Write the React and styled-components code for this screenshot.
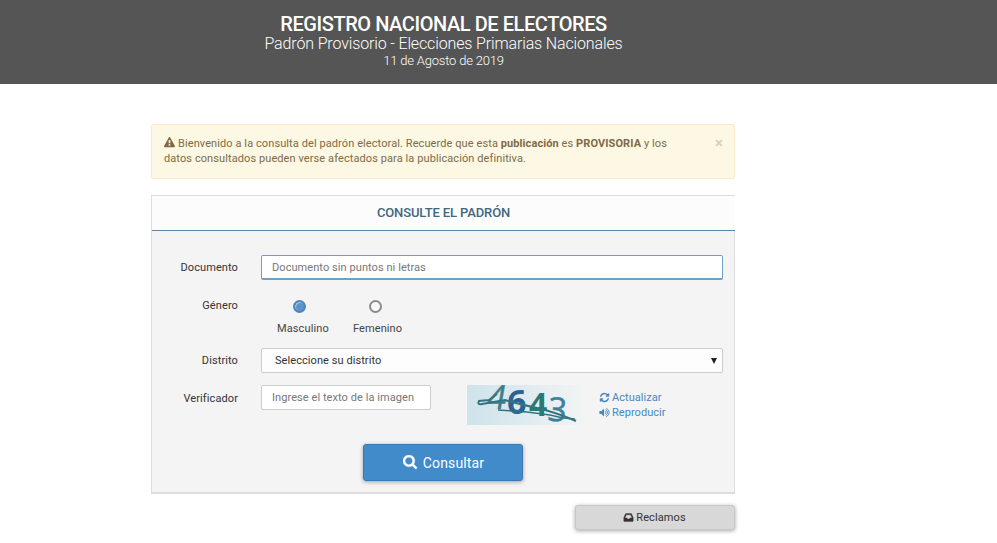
import React, { useState } from "react";
import styled, { createGlobalStyle } from "styled-components";

const GlobalStyle = createGlobalStyle`
  * {
    box-sizing: border-box;
  }

  body {
    min-height: 100vh;
    margin: 0;
    background: #fff;
    color: #333;
    font-family: Roboto, sans-serif;
    font-size: 11px;
    line-height: 15px;
  }
`;

const Page = styled.div`
  min-height: 100vh;
`;

// Dark top band
const Header = styled.header`
  height: 84px;
  padding: 13px 110px 0 0;
  background: #555;
  color: #fff;
  text-align: center;
`;

const Title = styled.h1`
  margin: 0;
  font-size: 20px;
  font-weight: 500;
  letter-spacing: -0.43px;
  line-height: 22px;
`;

const Subtitle = styled.div`
  font-size: 16px;
  font-weight: 300;
  letter-spacing: -0.14px;
  line-height: 17px;
`;

const HeaderDate = styled.div`
  font-size: 13px;
  font-weight: 300;
  letter-spacing: -0.2px;
  line-height: 17px;
`;

const Main = styled.main`
  width: 584px;
  margin: 40px 0 0 151px;
`;

// Warning message
const Alert = styled.div`
  display: flex;
  justify-content: space-between;
  height: 55px;
  padding: 11px 11px 0 12px;
  border: 1px solid #faebcc;
  border-radius: 2px;
  background: #fcf8e3;
  color: #806a45;
`;

const AlertText = styled.div`
  width: 520px;
  letter-spacing: 0.09px;
`;

const CloseButton = styled.button`
  align-self: flex-start;
  padding: 0;
  border: 0;
  background: none;
  color: #d8d2bd;
  font: bold 15px/15px Roboto, sans-serif;
`;

const Glyph = styled.svg`
  width: ${({ $size }) => $size}px;
  height: ${({ $size }) => $size}px;
  margin-right: ${({ $gap }) => $gap || 2}px;
  fill: currentColor;
  vertical-align: ${({ $drop }) => $drop || -2}px;
`;

// Form panel
const Panel = styled.section`
  height: 299px;
  margin-top: 16px;
  border: 1px solid #ddd;
  border-bottom: 2px solid #ddd;
  background: #f4f4f4;
`;

const PanelTitle = styled.h2`
  height: 35px;
  margin: 0 -1px 0 0;
  border-bottom: 1px solid #5b87a3;
  background: #fcfcfc;
  color: #41677f;
  font-size: 13px;
  font-weight: 500;
  letter-spacing: -0.12px;
  line-height: 34px;
  text-align: center;
`;

const Form = styled.form`
  padding: 24px 11px 0 0;
`;

const Row = styled.div`
  display: grid;
  grid-template-columns: 86px 1fr;
  column-gap: 23px;
  height: ${({ $height }) => $height}px;
`;

const Label = styled.label`
  padding-top: ${({ $top }) => $top || 5}px;
  letter-spacing: 0.1px;
  text-align: right;
`;

const Input = styled.input`
  width: ${({ $width }) => $width || "100%"};
  height: 25px;
  padding: 0 10px;
  border: 1px solid ${({ $active }) => ($active ? "#6ba3c8" : "#ccc")};
  border-bottom-width: ${({ $active }) => ($active ? 2 : 1)}px;
  border-radius: 2px;
  outline: 0;
  background: #fff;
  color: #333;
  font: 11px Roboto, sans-serif;
  letter-spacing: 0.07px;

  &::placeholder {
    color: #777;
    opacity: 1;
  }
`;

const Select = styled.div`
  display: flex;
  align-items: center;
  justify-content: space-between;
  height: 25px;
  padding: 0 5px 0 13px;
  border: 1px solid #ccc;
  border-radius: 2px;
  background: #fdfdfd;
  letter-spacing: 0.07px;
`;

const Arrow = styled.span`
  border: 3.5px solid transparent;
  border-top: 6px solid #222;
  border-bottom: 0;
`;

const Options = styled.div`
  display: flex;
  gap: 24px;
  padding: 7px 0 0 16px;
`;

const Option = styled.button`
  display: flex;
  flex-direction: column;
  gap: 8px;
  height: 36px;
  padding: 0;
  border: 0;
  background: none;
  color: #444;
  font: 11px/15px Roboto, sans-serif;
  letter-spacing: 0.12px;
`;

const Dot = styled.span`
  width: 13px;
  height: 13px;
  margin-left: 16px;
  border: 2px solid ${({ $on }) => ($on ? "#4f86ba" : "#8b8b8b")};
  border-radius: 50%;
  background: ${({ $on }) => ($on ? "#5a94ca" : "#f8f8f8")};
  box-shadow: ${({ $on }) => ($on ? "inset 1px 1px 0 #a4c6e4" : "none")};
`;

const Verifier = styled.div`
  display: flex;
  align-items: flex-start;
`;

const Captcha = styled.svg`
  width: 120px;
  height: 40px;
  margin: 0 12px 0 36px;
`;

const Links = styled.div`
  display: flex;
  flex-direction: column;
  padding-top: 5px;
`;

const Link = styled.a`
  color: #4a88c0;
  letter-spacing: 0.05px;
  text-decoration: none;
  white-space: nowrap;
`;

const SubmitButton = styled.button`
  display: block;
  width: 160px;
  height: 37px;
  margin: 0 auto;
  padding: 0 0 0 1px;
  border: 1px solid #3879b3;
  border-radius: 3px;
  background: #428bca;
  box-shadow: 0 1px 4px rgba(0, 0, 0, 0.35);
  color: #fff;
  font: 14px/34px Roboto, sans-serif;
  letter-spacing: 0.15px;
`;

const ClaimsButton = styled.button`
  display: block;
  width: 160px;
  height: 25px;
  margin: 11px 0 0 auto;
  padding: 0 1px 0 0;
  border: 1px solid #c8c8c8;
  border-radius: 3px;
  background: #d8d8d8;
  box-shadow: 0 1px 4px rgba(0, 0, 0, 0.35);
  color: #333;
  font: 11px/23px Roboto, sans-serif;
  letter-spacing: 0.1px;
`;

const ICONS = {
  warning:
    "M1024 1375v-190q0-14-9.500-23.500t-22.500-9.500h-192q-13 0-22.500 9.500t-9.500 23.500v190q0 14 9.500 23.500t22.500 9.500h192q13 0 22.500-9.500t9.500-23.500zm-2-374l18-459q0-12-10-19-13-11-24-11h-220q-11 0-24 11-10 7-10 21l17 457q0 10 10 16.500t24 6.500h185q14 0 23.500-6.500t10.500-16.500zm-14-934l768 1408q35 63-2 126-17 29-46.500 46t-63.500 17h-1536q-34 0-63.500-17t-46.500-46q-37-63-2-126l768-1408q17-31 47-49t65-18 65 18 47 49z",
  refresh:
    "M1639 1056q0 5-1 7-64 268-268 434.500t-478 166.500q-146 0-282.500-55t-243.500-157l-129 129q-19 19-45 19t-45-19-19-45v-448q0-26 19-45t45-19h448q26 0 45 19t19 45-19 45l-137 137q71 66 161 102t187 36q134 0 250-65t186-179q11-17 53-117 8-23 30-23h192q13 0 22.500 9.500t9.500 22.500zm25-800v448q0 26-19 45t-45 19h-448q-26 0-45-19t-19-45 19-45l138-138q-148-137-349-137-134 0-250 65t-186 179q-11 17-53 117-8 23-30 23h-199q-13 0-22.500-9.500t-9.500-22.500v-7q65-268 270-434.500t480-166.500q146 0 284 55.500t245 156.500l130-129q19-19 45-19t45 19 19 45z",
  search:
    "M1152 704q0-185-131.500-316.500t-316.500-131.500-316.500 131.500-131.500 316.500 131.500 316.500 316.500 131.500 316.500-131.500 131.500-316.500zm512 832q0 52-38 90t-90 38q-54 0-90-38l-343-342q-179 124-399 124-143 0-273.500-55.500t-225-150-150-225-55.500-273.500 55.500-273.500 150-225 225-150 273.500-55.500 273.500 55.500 225 150 150 225 55.500 273.500q0 220-124 399l343 343q37 37 37 90z",
  inbox:
    "M1151 960h316q-1-3-2.500-8t-2.500-8l-212-496h-708l-212 496q-1 2-2.500 8t-2.500 8h316l95 192h320zm513 30v482q0 26-19 45t-45 19h-1408q-26 0-45-19t-19-45v-482q0-62 25-123l238-552q10-25 36.500-42t52.500-17h832q26 0 52.500 17t36.500 42l238 552q25 61 25 123z",
};

const Icon = ({ name, size, gap, drop, bold }) => (
  <Glyph viewBox="0 0 1792 1792" $size={size} $gap={gap} $drop={drop}>
    <path d={ICONS[name]} stroke="currentColor" strokeWidth={bold || 0} />
  </Glyph>
);

const VolumeIcon = () => (
  <Glyph viewBox="0 0 1792 1792" $size={11}>
    <path d="M832 352v1088q0 26-19 45t-45 19-45-19l-333-333h-262q-26 0-45-19t-19-45v-384q0-26 19-45t45-19h262l333-333q19-19 45-19t45 19 19 45z" />
    <g fill="none" stroke="currentColor" strokeWidth="150" strokeLinecap="round">
      <path d="M1035 710q117 60 117 186t-117 186" />
      <path d="M1137 475q271 132 271 421t-271 421" />
      <path d="M1238 240q426 214 426 656t-426 656" />
    </g>
  </Glyph>
);

const CaptchaImage = () => (
  <Captcha viewBox="0 0 120 40">
    <defs>
      <linearGradient id="captchaBg">
        <stop offset="0" stopColor="#cfe3eb" />
        <stop offset="0.5" stopColor="#dfebf0" />
        <stop offset="1" stopColor="#f4f4f4" />
      </linearGradient>
    </defs>
    <rect width="120" height="40" fill="url(#captchaBg)" />
    <g fontFamily="Open Sans, sans-serif">
      <text
        x="19"
        y="24"
        fontSize="33"
        fill="#3e7f87"
        stroke="#3e7f87"
        strokeWidth="0.5"
        transform="translate(4 0) skewX(-10)"
      >
        4
      </text>
      <text x="40" y="29" fontSize="34" fontWeight="700" fill="#2b6294">6</text>
      <text x="62" y="31" fontSize="32" fontWeight="700" fill="#287b75">4</text>
      <text
        x="81"
        y="36"
        fontSize="33"
        fill="#3a829c"
        stroke="#3a829c"
        strokeWidth="0.5"
        transform="rotate(5 90 25)"
      >
        3
      </text>
    </g>
    <g fill="none" stroke="#347481">
      <path
        d="M30 9L22 15L12 16Q10 20 15 19L38 15Q52 19 70 23T109 36"
        strokeWidth="2"
      />
      <path d="M31 25L60 27L83 30L96 33L108 34" strokeWidth="1.500" />
    </g>
  </Captcha>
);

const genders = ["Masculino", "Femenino"];

const App = () => {
  const [gender, setGender] = useState("Masculino");

  return (
    <Page>
      <GlobalStyle />
      <Header>
        <Title>REGISTRO NACIONAL DE ELECTORES</Title>
        <Subtitle>Padrón Provisorio - Elecciones Primarias Nacionales</Subtitle>
        <HeaderDate>11 de Agosto de 2019</HeaderDate>
      </Header>

      <Main>
        <Alert>
          <AlertText>
            <Icon name="warning" size={11} gap={3} drop={-1} />
            Bienvenido a la consulta del padrón electoral. Recuerde que esta{" "}
            <b>publicación</b> es <b>PROVISORIA</b> y los datos consultados
            pueden verse afectados para la publicación definitiva.
          </AlertText>
          <CloseButton>×</CloseButton>
        </Alert>

        <Panel>
          <PanelTitle>CONSULTE EL PADRÓN</PanelTitle>
          <Form onSubmit={(e) => e.preventDefault()}>
            <Row $height={38}>
              <Label>Documento</Label>
              <Input $active placeholder="Documento sin puntos ni letras" />
            </Row>
            <Row $height={55}>
              <Label>Género</Label>
              <Options>
                {genders.map((name) => (
                  <Option key={name} type="button" onClick={() => setGender(name)}>
                    <Dot $on={gender === name} />
                    {name}
                  </Option>
                ))}
              </Options>
            </Row>
            <Row $height={37}>
              <Label>Distrito</Label>
              <Select>
                Seleccione su distrito
                <Arrow />
              </Select>
            </Row>
            <Row $height={59}>
              <Label $top={6}>Verificador</Label>
              <Verifier>
                <Input $width="170px" placeholder="Ingrese el texto de la imagen" />
                <CaptchaImage />
                <Links>
                  <Link>
                    <Icon name="refresh" size={11} />
                    Actualizar
                  </Link>
                  <Link>
                    <VolumeIcon />
                    Reproducir
                  </Link>
                </Links>
              </Verifier>
            </Row>
          </Form>
          <SubmitButton>
            <Icon name="search" size={15} gap={5} drop={-2} bold={40} />
            Consultar
          </SubmitButton>
        </Panel>

        <ClaimsButton>
          <Icon name="inbox" size={11} bold={60} />
          Reclamos
        </ClaimsButton>
      </Main>
    </Page>
  );
};

export default App;
